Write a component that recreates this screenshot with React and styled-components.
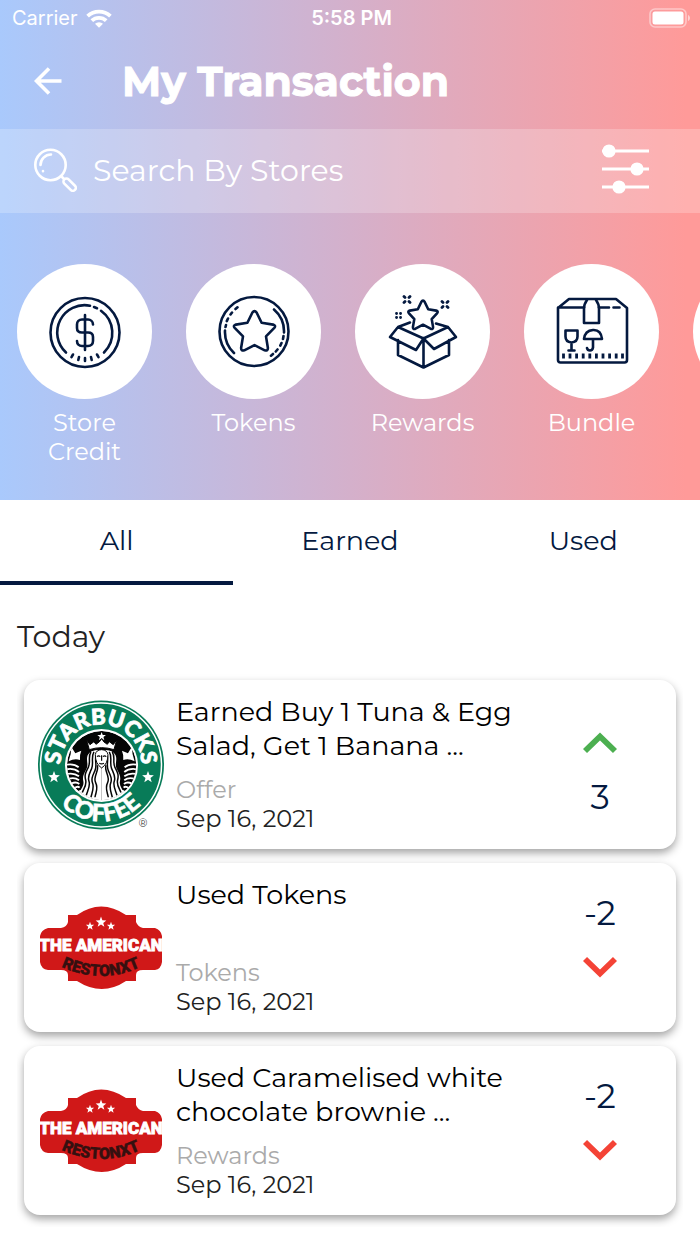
import React, { useState } from 'react'
import styled, { createGlobalStyle } from 'styled-components';

const navy = '#04193f';

const categories = [
    { id: 'credit', label: 'Store Credit' },
    { id: 'tokens', label: 'Tokens' },
    { id: 'rewards', label: 'Rewards' },
    { id: 'bundle', label: 'Bundle' },
    { id: 'more', label: '' },
]

const tabs = ['All', 'Earned', 'Used']

const transactions = [
    { id: 1, logo: 'starbucks', title: 'Earned Buy 1 Tuna & Egg Salad, Get 1 Banana ...', type: 'Offer', date: 'Sep 16, 2021', amount: 3 },
    { id: 2, logo: 'american', title: 'Used Tokens', type: 'Tokens', date: 'Sep 16, 2021', amount: -2 },
    { id: 3, logo: 'american', title: 'Used Caramelised white chocolate brownie ...', type: 'Rewards', date: 'Sep 16, 2021', amount: -2 },
]

const App = () => {
    const [tab, setTab] = useState('All');
    const [search, setSearch] = useState('');

    const visible = transactions.filter(item => {
        if (tab === 'Earned') return item.amount > 0
        if (tab === 'Used') return item.amount < 0
        return true
    })

    return (
        <Page>
            <GlobalStyle />
            <Header>
                <StatusBar>
                    <Carrier>Carrier <WifiIcon /></Carrier>
                    <Clock>5:58 PM</Clock>
                    <BatteryIcon />
                </StatusBar>
                <TitleBar>
                    <IconButton aria-label="Back"><BackIcon /></IconButton>
                    <Title>My Transaction</Title>
                </TitleBar>
                <SearchBar>
                    <SearchIcon />
                    <SearchInput
                        aria-label="Search By Stores"
                        placeholder="Search By Stores"
                        value={search}
                        onChange={e => setSearch(e.target.value)}
                    />
                    <IconButton aria-label="Filters"><FilterIcon /></IconButton>
                </SearchBar>
                <Categories>
                    {categories.map(item => (
                        <Category key={item.id} aria-label={item.label || 'More'}>
                            <Circle>{switchIcon(item.id)}</Circle>
                            <span>{item.label}</span>
                        </Category>
                    ))}
                </Categories>
            </Header>
            <Tabs role="tablist">
                {tabs.map(name => (
                    <Tab key={name} role="tab" aria-selected={tab === name} $active={tab === name} onClick={() => setTab(name)}>{name}</Tab>
                ))}
            </Tabs>
            <Content>
                <Day>Today</Day>
                <List>
                    {visible.map(item => (
                        <Card key={item.id}>
                            <Logo>{item.logo === 'starbucks' ? <StarbucksLogo /> : <AmericanLogo id={item.id} />}</Logo>
                            <Info>
                                <Name>{item.title}</Name>
                                <Type>{item.type}</Type>
                                <DateText>{item.date}</DateText>
                            </Info>
                            <Amount $earned={item.amount > 0}>
                                <span>{item.amount}</span>
                                <Chevron up={item.amount > 0} />
                            </Amount>
                        </Card>
                    ))}
                </List>
            </Content>
        </Page>
    )
}

export default App;


const GlobalStyle = createGlobalStyle`
    * {
        box-sizing: border-box;
    }
    body {
        margin: 0;
        background: #fff;
        font-family: Montserrat, Inter, sans-serif;
        font-weight: 400;
    }
    button, input {
        margin: 0;
        padding: 0;
        border: none;
        background: none;
        color: inherit;
        font: inherit;
    }
    svg {
        display: block;
        flex-shrink: 0;
    }
`

const Page = styled.main`
    overflow: hidden;
`

const Header = styled.header`
    padding-bottom: 34px;
    color: #fff;
    background: linear-gradient(90deg, #a9c9fc 0%, #d4b0cb 50%, #ff9a99 98%);
`

const StatusBar = styled.div`
    display: grid;
    grid-template-columns: 1fr auto 1fr;
    align-items: center;
    height: 36px;
    padding: 0 9px 0 12px;
    font-family: Inter, sans-serif;
    font-size: 20px;

    > svg {
        justify-self: end;
    }
`

const Carrier = styled.div`
    display: flex;
    align-items: center;
    gap: 8px;
`

const Clock = styled.time`
    font-weight: 600;
`

const TitleBar = styled.div`
    display: flex;
    align-items: center;
    gap: 60px;
    height: 93px;
    padding: 0 34px 3px;
`

const Title = styled.h1`
    margin: 0;
    font-size: 41px;
    font-weight: 700;
    line-height: 52px;
    -webkit-text-stroke: 1px #fff;
`

const IconButton = styled.button`
    cursor: pointer;
`

const SearchBar = styled.div`
    display: flex;
    align-items: center;
    gap: 16px;
    height: 84px;
    padding: 0 50px 2px 34px;
    background: rgba(255, 255, 255, .22);
`

const SearchInput = styled.input`
    flex: 1;
    min-width: 0;
    font-size: 30px;
    outline: none;

    &::placeholder {
        color: #fff;
        opacity: 1;
    }
`

const Categories = styled.nav`
    display: flex;
    align-items: flex-start;
    gap: 34px;
    padding: 51px 0 0 17px;
    overflow: hidden;
`

const Category = styled.button`
    display: flex;
    flex: 0 0 135px;
    flex-direction: column;
    align-items: center;
    gap: 9px;
    font-size: 24px;
    line-height: 29px;
    cursor: pointer;

    span {
        max-width: 104px;
    }
`

const Circle = styled.div`
    display: flex;
    align-items: center;
    justify-content: center;
    width: 135px;
    height: 135px;
    border-radius: 50%;
    background: #fff;
    color: ${navy};
`

const Tabs = styled.div`
    display: grid;
    grid-template-columns: repeat(3, 1fr);
    height: 85px;
`

const Tab = styled.button`
    border-bottom: 4px solid ${({ $active }) => $active ? navy : 'transparent'};
    color: ${navy};
    font-size: 27px;
    cursor: pointer;
`

const Content = styled.section`
    padding: 0 17px;
`

const Day = styled.h2`
    margin: 0;
    padding: 34px 0 18px;
    color: #222;
    font-size: 30px;
    font-weight: 400;
    line-height: 36px;
`

const List = styled.ul`
    display: flex;
    flex-direction: column;
    gap: 14px;
    margin: 0;
    padding: 7px 7px 12px;
    overflow: hidden;
    list-style: none;
`

const Card = styled.li`
    display: flex;
    align-items: center;
    min-height: 169px;
    padding: 14px;
    border-radius: 16px;
    background: #fff;
    box-shadow: 0 4px 8px rgba(0, 0, 0, .36);
`

const Logo = styled.div`
    display: flex;
    justify-content: center;
    width: 126px;
`

const Info = styled.div`
    display: flex;
    flex: 1;
    flex-direction: column;
    min-width: 0;
    padding: 0 0 2px 12px;
`

const Name = styled.h3`
    max-width: 344px;
    min-height: 68px;
    margin: 0 0 12px;
    color: #000;
    font-size: 27px;
    font-weight: 400;
    line-height: 34px;
`

const Type = styled.span`
    color: #aaa;
    font-size: 24px;
    line-height: 29px;
`

const DateText = styled.time`
    color: #222;
    font-size: 24px;
    line-height: 29px;
`

const Amount = styled.div`
    display: flex;
    flex-direction: ${({ $earned }) => $earned ? 'column-reverse' : 'column'};
    align-items: center;
    gap: 22px;
    width: 124px;
    padding: ${({ $earned }) => $earned ? '20px 0 0' : '0 0 26px'};
    color: ${navy};
    font-size: 34px;
    line-height: 42px;
`


const WifiIcon = () => (
    <svg width="26" height="19" viewBox="0 0 26 19" fill="none" stroke="#fff" strokeWidth="3.800">
        <path d="M1.600 7.200a16.500 16.500 0 0 1 22.800 0" />
        <path d="M5.800 11.700a10.500 10.500 0 0 1 14.400 0" />
        <path d="M13 18.800l-4-4a5.700 5.700 0 0 1 8 0z" fill="#fff" stroke="none" />
    </svg>
)

const BatteryIcon = () => (
    <svg width="42" height="20" viewBox="0 0 42 20">
        <rect x="1" y="1" width="36" height="18" rx="5" fill="none" stroke="#fff" strokeOpacity=".45" strokeWidth="1.6" />
        <rect x="3.500" y="3.500" width="31" height="13" rx="2.5" fill="#fff" />
        <path d="M39 7c2.600 1.200 2.600 4.800 0 6z" fill="#fff" fillOpacity=".55" />
    </svg>
)

const BackIcon = () => (
    <svg width="28" height="28" viewBox="0 0 28 28" fill="none" stroke="#fff" strokeWidth="3.600">
        <path d="M27.500 14H3M15 1.500L2.500 14 15 26.500" />
    </svg>
)

const SearchIcon = () => (
    <svg width="43" height="44" viewBox="0 0 43 44" fill="none" stroke="#fff" strokeWidth="2.600" strokeLinecap="round">
        <circle cx="16.500" cy="17" r="15.200" />
        <path d="M6.500 17A10.500 10.500 0 0 1 17 6.500M9 23v.2M28 29l2 2" />
        <rect x="28" y="34" width="15" height="6" rx="3" transform="rotate(45 36 37)" />
    </svg>
)

const FilterIcon = () => (
    <svg width="48" height="52" viewBox="0 0 48 52" stroke="#fff" strokeWidth="2.800" fill="#fff">
        <path d="M0 7h47M0 25h47M0 43h47" />
        <g stroke="none">
            <circle cx="7" cy="7" r="6.600" />
            <circle cx="35" cy="25" r="6.600" />
            <circle cx="17" cy="43" r="6.600" />
        </g>
    </svg>
)

const Chevron = ({ up }) => (
    <svg width="34" height="22" viewBox="0 0 34 22" fill="none" strokeWidth="5.800" stroke={up ? '#4caf50' : '#f44336'}>
        <path d={up ? 'M2 19L17 4.500l15 14.500' : 'M2 3l15 14.500L32 3'} />
    </svg>
)

const lineIcon = { width: 74, height: 74, viewBox: '0 0 74 74', fill: 'none', stroke: 'currentColor', strokeWidth: 2.6, strokeLinecap: 'round', strokeLinejoin: 'round' }

const switchIcon = (item) => {

    switch (item) {
        case 'credit': return <svg {...lineIcon}>
            <circle cx="37" cy="37.500" r="34.500" />
            <path d="M18 57.500A27.300 27.300 0 0 1 42 10.700M46 12l3 1.200M53 15.800A27.300 27.300 0 0 1 56 57.500" />
            <path d="M25 59.500l-1.500 2.600M31 62l-.7 3M37 63v3M43 62l.7 3M49 59.500l1.500 2.600" />
            <path d="M45 29.500c0-3-2.500-5-5-5h-6c-3 0-5 2-5 5v3.500c0 3 2 4.500 5 4.500h6c3 0 5 1.500 5 4.500V46c0 3-2 5-5 5h-6c-3 0-5-2-5-5M37 20v35" />
        </svg>

        case 'tokens': return <svg {...lineIcon}>
            <circle cx="37" cy="36.500" r="34.500" />
            <path d="M57 14.500a29 29 0 0 1 10 23M8 35.500a29 29 0 0 0 9 22.500" />
            <path d="M20.500 12.300l-2 1.700M15 17.500l-1.500 2M11 23.500l-1.200 2.600M9 30l-.5 2M66.500 41l-.5 3M64.500 48l-1.200 2.600M60.500 54.500l-1.700 2M56 59l-2 1.700" />
            <path d="M35.400 17.500q2.100-2.800 4.200 0l5 10.200 11.500 1.900q3.200 1 1.200 3.300l-8.300 8.500 1.900 11.600q0 3.300-3.200 2.300l-10.200-5.200-10.200 5.200q-3.200 1-3.200-2.300l1.900-11.600-8.300-8.500q-2-2.300 1.200-3.300l11.500-1.900z" />
        </svg>

        case 'rewards': return <svg {...lineIcon}>
            <path d="M12 45v15l25.500 12.500L63 60V45M37.500 43v29M12 32l25.500 11.500L62 32l8 10-22 12-10.500-10.500L30 55 4 42zM12 32l12-4.500M62 32l-12-3.500" />
            <path d="M35.300 7q1.700-3 3.400 0l3.500 7.300 8 1.300q2.500.8.800 2.700l-5.300 5.800 1.400 8q0 2.600-2.600 1.600l-7.500-4-7.500 4q-2.600 1-2.600-1.600l1.400-8-5.300-5.800q-1.700-1.900.8-2.700l8-1.300z" />
            <g strokeWidth="2.800">
                <path d="M18 1.500l1 1M24 1.500l-1 1M18 7.500l1-1M24 7.500l-1-1M56 6.500l1 1M62 6.500l-1 1M56 12.500l1-1M62 12.500l-1-1" />
                <path d="M10.500 18.500h.1M14.500 18.500h.1M10.500 22.500h.1M14.500 22.500h.1" />
            </g>
        </svg>

        case 'bundle': return <svg {...lineIcon}>
            <path d="M3 13L14 4h47l11 9v52q0 2.500-2.500 2.500h-64Q3 67.500 3 65zM3 12.500h26M44 12.500h10M58.500 12.500h6" />
            <path d="M32 5q-3 4-3 9v14h15V14q0-5-3-9" />
            <path d="M10.500 35.500h12v6q0 5.500-6 6-6-.5-6-6zM16.500 48v7M13.500 55.500h6" />
            <path d="M29 44q1-8.500 9-9t9 9zM38 44v8.500q-.5 3-3 3t-3-2.500" />
            <path d="M8.500 58.500v5M15 58.500v5M21.600 58.500v5M28.200 58.500v5M34.800 58.500v5M41.400 58.500v5M48 58.500v5M54.600 58.500v5M61.200 58.500v5M67.500 58.500v5" strokeLinecap="butt" strokeWidth="2.800" />
        </svg>

        default: return null
    }
}

const star = 'M0-6l1.500 4.100 4.400.2-3.400 2.700 1.200 4.200L0 2.800l-3.700 2.400 1.200-4.200L-5.900-1.700l4.400-.2z'

// one half of the siren, mirrored for the other side
const SirenSide = (props) => (
    <g {...props}>
        <path d="M34 68l12 20 18-8q-6 14-4 28-16-6-34 4 8-20 8-44z" fill="#fff" />
        <g fill="none" stroke="#fff" strokeWidth="5.500">
            <path d="M20 122q22-4 36 8M20 136q22-4 37 8M22 150q20-4 35 7M27 164q18-5 30 5M34 179q14-7 24 1M43 193q10-8 16-2M54 207q6-9 12-5" />
        </g>
        <path d="M125 78q-34-2-42 16c-6 16 4 26-4 42s-12 22-9 36-8 24-12 36l20 20h47z" fill="#fff" />
        <g fill="none" stroke="#050505" strokeWidth="4.500">
            <path d="M93 84c-10 14 0 30-8 46s-12 22-8 38-6 26-10 38" />
            <path d="M102 84c-10 16 0 34-7 50s-13 24-8 38-4 28-8 42" />
            <path d="M108 94c-4 16 4 30-3 46s-12 24-7 38-2 28-5 42" />
            <path d="M112 124c6 18-14 34-5 52s0 30-2 44" />
        </g>
    </g>
)

const StarbucksLogo = () => (
    <svg width="126" height="130" viewBox="0 0 126 130" role="img" aria-label="Starbucks Coffee">
        <defs>
            <path id="sb-top" d="M22.500 74V65A40.500 40.500 0 0 1 103.500 65V74" />
            <path id="sb-bottom" d="M6.500 65A56.500 56.500 0 0 0 119.500 65" />
            <clipPath id="sb-disc"><circle cx="125" cy="125" r="104" /></clipPath>
        </defs>
        <ellipse cx="63" cy="65" rx="63" ry="64.500" fill="#087b58" />
        <ellipse cx="63" cy="65" rx="60.500" ry="62" fill="none" stroke="#fff" strokeWidth="1.500" />
        <circle cx="63.500" cy="65.500" r="36.500" fill="#fff" />
        <g transform="translate(22 24) scale(.333)" clipPath="url(#sb-disc)">
            <circle cx="125" cy="125" r="104" fill="#050505" />
            <SirenSide />
            <SirenSide transform="translate(250 0) scale(-1 1)" />
            <path d={star} transform="translate(125 37) scale(2.200)" fill="#fff" />
            <path d="M80 48l10 14 12-9 6 8 10-7 7-10 7 10 10 7 6-8 12 9 10-14-8 29q-37-12-74 0z" fill="#fff" stroke="#050505" strokeWidth="3" />
            <path d="M106 92q2-14 19-15 17 1 19 15 0 28-19 40-19-12-19-40z" fill="#fff" stroke="#050505" strokeWidth="3" />
            <path d="M111 98q5-4 10 0M129 98q5-4 10 0M125 94v16M118 118q7 4 14 0" fill="none" stroke="#050505" strokeWidth="3.500" />
        </g>
        <LogoText $font="Lato" fontSize="22" textAnchor="middle" strokeWidth=".8" stroke="#fff">
            <textPath href="#sb-top" startOffset="50%">STARBUCKS</textPath>
        </LogoText>
        <LogoText $font="Lato" fontSize="24" textAnchor="middle" strokeWidth=".5" stroke="#fff">
            <textPath href="#sb-bottom" startOffset="50%">COFFEE</textPath>
        </LogoText>
        <path d={star} fill="#fff" transform="translate(16 77)" />
        <path d={star} fill="#fff" transform="translate(110 77)" />
        <text x="105" y="127" fontSize="11" textAnchor="middle" fill="#222">®</text>
    </svg>
)

const AmericanLogo = ({ id }) => (
    <svg width="122" height="84" viewBox="0 0 122 84" role="img" aria-label="The American Restonxt">
        <defs>
            <path id={`am-curve-${id}`} d="M12 56Q61 84 110 56" />
        </defs>
        <path d="M28 9h9q24-17 49 0h10v7q2 5 7 6h12q6 2 7 8v26q-1 7-7 8h-12q-7 0-7 5v6H86q-24 16-49 0h-9v-6q0-5-7-5H8q-7-1-8-8V30q1-6 8-8h13q6-1 7-6z" fill="#d01818" />
        <g fill="#fff">
            <path d={star} transform="translate(61 16) scale(.9)" />
            <path d={star} transform="translate(50 20) scale(.7)" />
            <path d={star} transform="translate(71 20) scale(.7)" />
        </g>
        <LogoText $font="Roboto" x="61" y="45" fontSize="17" textAnchor="middle" stroke="#fff" strokeWidth=".8">THE AMERICAN</LogoText>
        <LogoText $font="Roboto" $color="#351010" fontSize="16" textAnchor="middle" stroke="#351010" strokeWidth=".4">
            <textPath href={`#am-curve-${id}`} startOffset="50%">RESTONXT</textPath>
        </LogoText>
    </svg>
)

const LogoText = styled.text`
    fill: ${({ $color }) => $color || '#fff'};
    font-family: ${({ $font }) => $font}, sans-serif;
    font-weight: 900;
`
